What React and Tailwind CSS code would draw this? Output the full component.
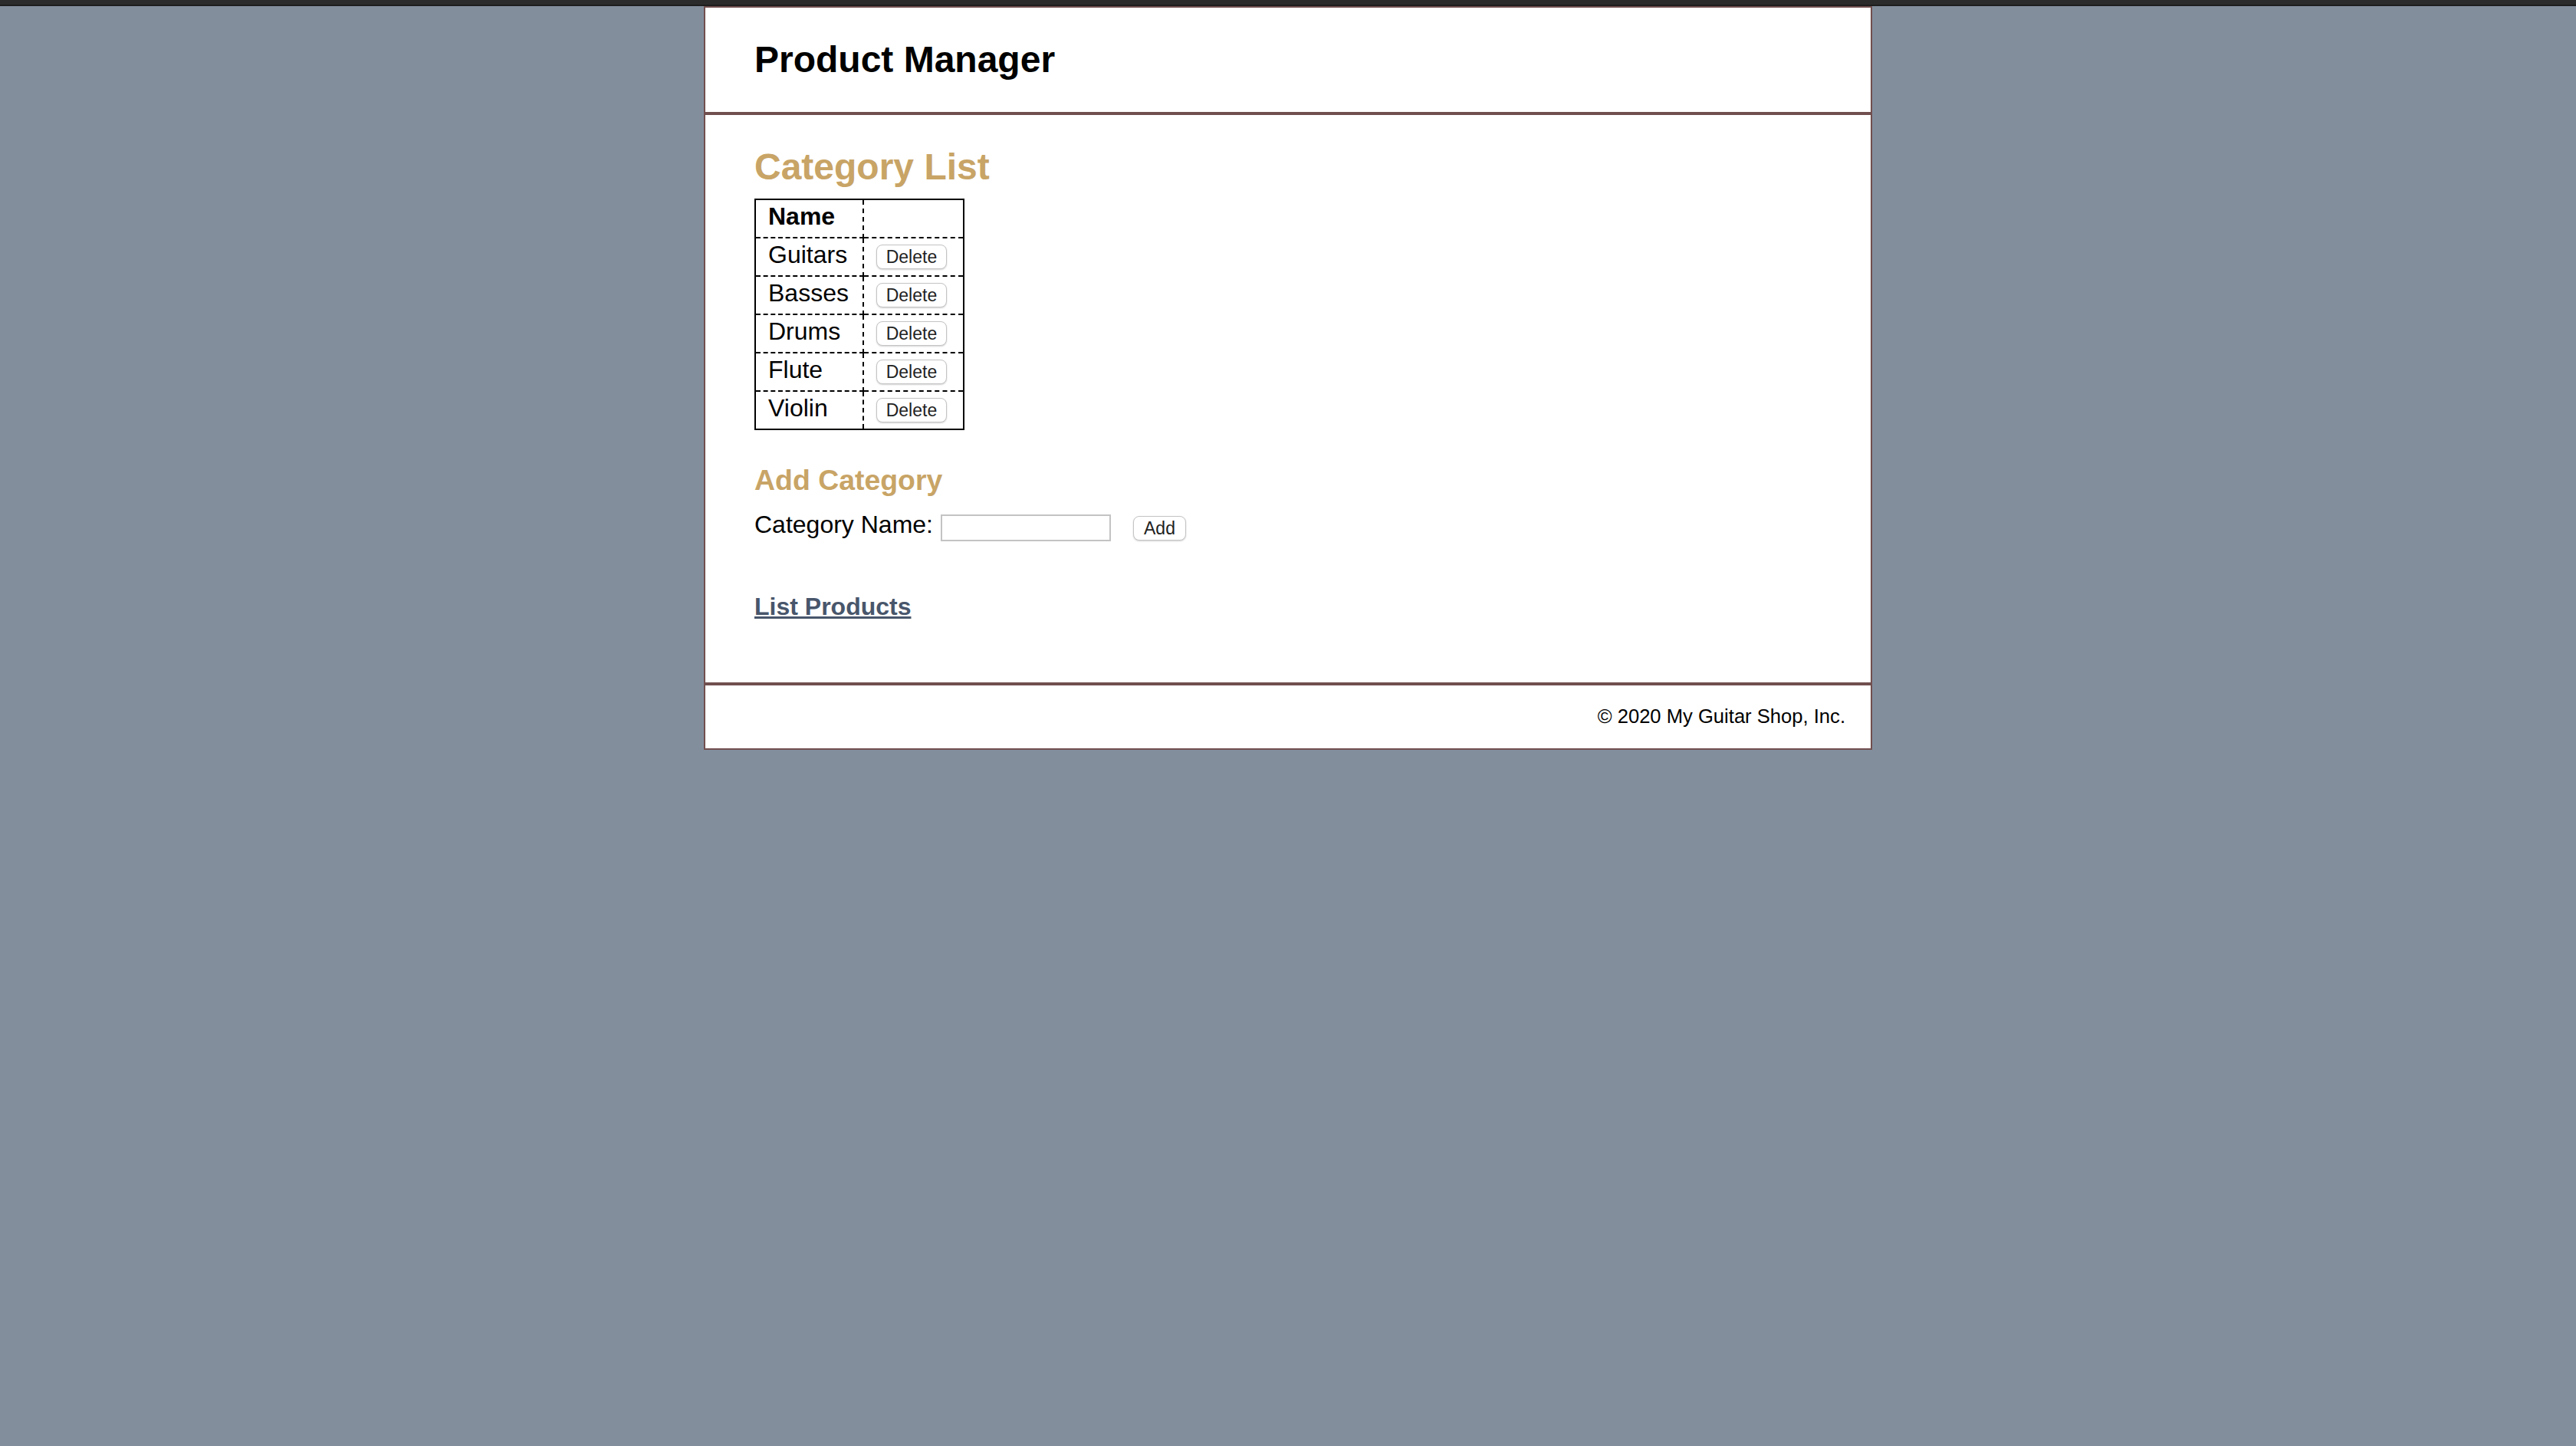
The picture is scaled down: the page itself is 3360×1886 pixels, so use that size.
const categories = ['Guitars', 'Basses', 'Drums', 'Flute', 'Violin']

const font = { fontFamily: '"Liberation Sans", Arial, Helvetica, sans-serif' }

const SmallButton = ({ children, className = '' }) => (
  <button
    type="button"
    className={`h-[32px] bg-white border border-[#c4c4c4] rounded-[8px] shadow-[0_1px_2px_rgba(0,0,0,0.18)] text-[23px] leading-[30px] text-[#222] ${className}`}
  >
    {children}
  </button>
)

export default function App() {
  return (
    <div className="min-h-screen bg-[#838e9d]" style={font}>
      {/* top bar */}
      <div className="h-[8px] bg-[#2b2b2b] border-b-2 border-[#1d1d1d]" />

      <div className="w-[1524px] mx-auto bg-white border-2 border-[#714f4f]">
        {/* Header */}
        <header className="border-b-4 border-[#714f4f] pt-[40px] pb-[41px] px-[64px]">
          <h1 className="text-[48px] leading-[55px] font-bold text-black">Product Manager</h1>
        </header>

        {/* Main */}
        <main className="pt-[40px] pb-[80px] px-[64px]">
          <h2 className="text-[48px] leading-[55px] font-bold text-[#c8a466]">Category List</h2>

          <table className="mt-[14px] border-collapse border-2 border-solid border-black text-[32px] leading-[36px] text-black">
            <thead>
              <tr>
                <th className="border-2 border-dashed border-black text-left font-bold pl-[16px] pr-[18px] pt-[3px] pb-[9px]">Name</th>
                <th className="border-2 border-dashed border-black pl-[16px] pr-[21px] pt-[3px] pb-[9px]">&nbsp;</th>
              </tr>
            </thead>
            <tbody>
              {categories.map((c) => (
                <tr key={c}>
                  <td className="border-2 border-dashed border-black pl-[16px] pr-[18px] pt-[3px] pb-[9px]">{c}</td>
                  <td className="border-2 border-dashed border-black pl-[16px] pr-[21px] py-0 align-middle">
                    <SmallButton className="w-[92px] block">Delete</SmallButton>
                  </td>
                </tr>
              ))}
            </tbody>
          </table>

          <h3 className="mt-[44px] text-[37.44px] leading-[43px] font-bold text-[#c8a466]">Add Category</h3>

          <form className="mt-[18px] flex items-start" onSubmit={(e) => e.preventDefault()}>
            <label className="text-[32px] leading-[37px] text-black">Category Name:</label>
            <input
              type="text"
              className="ml-[10px] mt-[5px] w-[222px] h-[35px] border-2 border-[#c3c3c3] bg-white outline-none"
            />
            <SmallButton className="ml-[29px] mt-[7px] w-[69px]">Add</SmallButton>
          </form>

          <p className="mt-[67px] text-[32px] leading-[37px] font-bold">
            <a href="#" className="text-[#48566b] underline">List Products</a>
          </p>
        </main>

        {/* Footer */}
        <footer className="border-t-4 border-[#714f4f] pt-[26px] pb-[27px] pr-[33px]">
          <p className="text-right text-[25.6px] leading-[29px] text-black">&copy; 2020 My Guitar Shop, Inc.</p>
        </footer>
      </div>
    </div>
  )
}
